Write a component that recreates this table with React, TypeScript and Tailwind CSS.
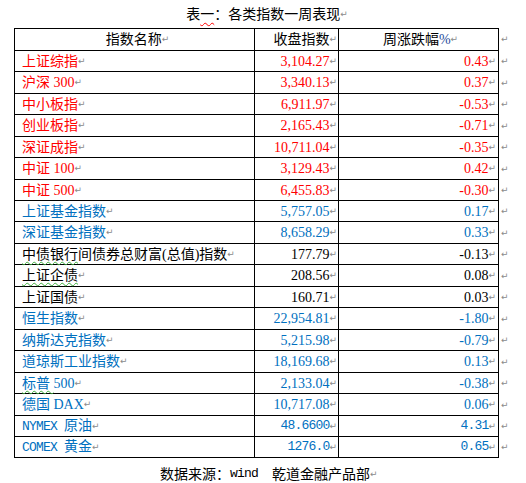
import React from "react";

const CJK = "font-['Liberation_Serif','Noto_Sans_CJK_SC',serif]";

type Row = {
  name: React.ReactNode;
  close: string;
  chg: string;
  color: string;
  mono?: boolean;
  h: string;
};

const Mark = () => (
  <span className="font-['DejaVu_Sans',sans-serif] text-[9px] text-[#8a8a8a] leading-none">↵</span>
);

const Mono = ({ children }: { children: React.ReactNode }) => (
  <span className="font-['Liberation_Mono',monospace] text-[13px] tracking-[-0.8px]">{children}</span>
);

const Wavy = ({ children }: { children: React.ReactNode }) => (
  <span className="underline decoration-wavy decoration-[#3fae3f] decoration-1 underline-offset-[2px]">{children}</span>
);

const rows: Row[] = [
  { name: "上证综指", close: "3,104.27", chg: "0.43", color: "text-[#ff0000]", h: "h-[21px]" },
  { name: "沪深 300", close: "3,340.13", chg: "0.37", color: "text-[#ff0000]", h: "h-[22px]" },
  { name: "中小板指", close: "6,911.97", chg: "-0.53", color: "text-[#ff0000]", h: "h-[21px]" },
  { name: "创业板指", close: "2,165.43", chg: "-0.71", color: "text-[#ff0000]", h: "h-[22px]" },
  { name: "深证成指", close: "10,711.04", chg: "-0.35", color: "text-[#ff0000]", h: "h-[21px]" },
  { name: "中证 100", close: "3,129.43", chg: "0.42", color: "text-[#ff0000]", h: "h-[22px]" },
  { name: "中证 500", close: "6,455.83", chg: "-0.30", color: "text-[#ff0000]", h: "h-[21px]" },
  { name: "上证基金指数", close: "5,757.05", chg: "0.17", color: "text-[#0070c0]", h: "h-[21px]" },
  { name: "深证基金指数", close: "8,658.29", chg: "0.33", color: "text-[#0070c0]", h: "h-[22px]" },
  {
    name: (
      <>
        <Wavy>中债银行</Wavy>间债券总财富(总值)指数
      </>
    ),
    close: "177.79",
    chg: "-0.13",
    color: "text-black",
    h: "h-[21px]",
  },
  { name: <Wavy>上证企债</Wavy>, close: "208.56", chg: "0.08", color: "text-black", h: "h-[22px]" },
  { name: "上证国债", close: "160.71", chg: "0.03", color: "text-black", h: "h-[21px]" },
  { name: "恒生指数", close: "22,954.81", chg: "-1.80", color: "text-[#0070c0]", h: "h-[22px]" },
  { name: "纳斯达克指数", close: "5,215.98", chg: "-0.79", color: "text-[#0070c0]", h: "h-[21px]" },
  { name: "道琼斯工业指数", close: "18,169.68", chg: "0.13", color: "text-[#0070c0]", h: "h-[22px]" },
  {
    name: (
      <>
        <Wavy>标普 </Wavy>500
      </>
    ),
    close: "2,133.04",
    chg: "-0.38",
    color: "text-[#0070c0]",
    h: "h-[21px]",
  },
  { name: "德国 DAX", close: "10,717.08", chg: "0.06", color: "text-[#0070c0]", h: "h-[22px]" },
  {
    name: (
      <>
        <Mono>NYMEX </Mono>原油
      </>
    ),
    close: "48.6600",
    chg: "4.31",
    color: "text-[#0070c0]",
    mono: true,
    h: "h-[21px]",
  },
  {
    name: (
      <>
        <Mono>COMEX </Mono>黄金
      </>
    ),
    close: "1276.0",
    chg: "0.65",
    color: "text-[#0070c0]",
    mono: true,
    h: "h-[21px]",
  },
];

export default function App() {
  return (
    <div className={`w-[526px] h-[483px] bg-white ${CJK} text-[14px] text-black`}>
      <div className="h-[28px] flex items-center justify-center pl-[8px]">
        <span>
          表<span className="underline decoration-wavy decoration-[#ff0000] decoration-1 underline-offset-[3px]">一</span>：各类指数一周表现
        </span>
        <Mark />
      </div>

      <div className="ml-[14px] flex flex-col">
        <div className="flex items-center">
          <div className="flex h-[23px] border-t border-l border-black">
            <div className="w-[240px] border-r border-b border-black flex items-center justify-center pl-[6px]">
              <span>指数名称</span>
              <Mark />
            </div>
            <div className="w-[84px] border-r border-b border-black flex items-center justify-end pr-[1px]">
              <span>收盘指数</span>
              <Mark />
            </div>
            <div className="w-[160px] border-r border-b border-black flex items-center justify-center pl-[4px]">
              <span>
                周涨跌幅<span className="text-[#1f4e9c]">%</span>
              </span>
              <Mark />
            </div>
          </div>
          <span className="ml-[2px] flex items-center">
            <Mark />
          </span>
        </div>

        {rows.map((r, i) => (
          <div key={i} className="flex items-center">
            <div className={`flex ${r.h} border-l border-black ${r.color}`}>
              <div className="w-[240px] border-r border-b border-black flex items-center pl-[7px] whitespace-nowrap">
                <span>{r.name}</span>
                <Mark />
              </div>
              <div className="w-[84px] border-r border-b border-black flex items-center justify-end pr-[1px]">
                {r.mono ? <Mono>{r.close}</Mono> : <span>{r.close}</span>}
                <Mark />
              </div>
              <div className="w-[160px] border-r border-b border-black flex items-center justify-end pr-[2px]">
                {r.mono ? <Mono>{r.chg}</Mono> : <span>{r.chg}</span>}
                <Mark />
              </div>
            </div>
            <span className="ml-[2px] flex items-center">
              <Mark />
            </span>
          </div>
        ))}
      </div>

      <div className="mt-[6px] h-[20px] flex items-center pl-[160px] whitespace-pre">
        <span>数据来源：</span>
        <Mono>{"wind  "}</Mono>
        <span>乾道金融产品部</span>
        <Mark />
      </div>
    </div>
  );
}
